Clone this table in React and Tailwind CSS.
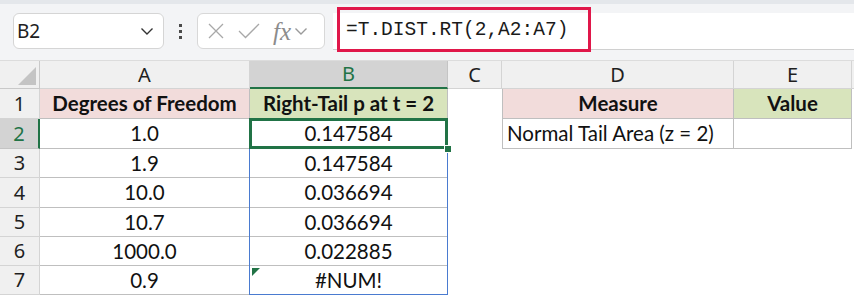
import React from "react";

const cols = "grid-cols-[40px_210px_198px_54px_232px_118px_1fr]";
const rowsTpl = "grid-rows-[28px_30px_30px_29px_30px_29px_29px_29px]";

const data = [
  ["1.0", "0.147584"],
  ["1.9", "0.147584"],
  ["10.0", "0.036694"],
  ["10.7", "0.036694"],
  ["1000.0", "0.022885"],
  ["0.9", "#NUM!"],
];

const Chevron = ({ className }) => (
  <svg className={className} width="14" height="9" viewBox="0 0 14 9" fill="none">
    <path d="M1.5 1.5 L7 7 L12.5 1.5" stroke="currentColor" strokeWidth="1.4" />
  </svg>
);

const Toolbar = () => (
  <div className="h-[61px] bg-[#f3f4f6] border-t-4 border-[#e4e7eb] border-b border-b-[#dcdcdc] flex items-start pt-[9px] pl-[13px]">
    {/* name box */}
    <div className="w-[151px] h-[36px] bg-white border border-[#d5d5d5] rounded-[6px] flex items-center justify-between pl-[3px] pr-[9px]">
      <span className="text-[19px] text-[#202020]" style={{ fontFamily: "'Noto Sans', sans-serif" }}>B2</span>
      <Chevron className="text-[#333]" />
    </div>
    <div className="w-[33px] h-[36px] flex flex-col items-center justify-center gap-[3px]">
      <span className="w-[3px] h-[3px] bg-[#4a4a4a]" />
      <span className="w-[3px] h-[3px] bg-[#4a4a4a]" />
      <span className="w-[3px] h-[3px] bg-[#4a4a4a]" />
    </div>
    {/* formula buttons */}
    <div className="w-[128px] h-[36px] bg-white border border-[#d8d8d8] rounded-[6px] flex items-center pl-[10px] text-[#a8a8a8]">
      <svg width="16" height="16" viewBox="0 0 16 16" fill="none">
        <path d="M1 1 L15 15 M15 1 L1 15" stroke="currentColor" strokeWidth="1.3" />
      </svg>
      <svg className="ml-[14px]" width="22" height="16" viewBox="0 0 22 16" fill="none">
        <path d="M1 8 L7.5 14.5 L21 1" stroke="currentColor" strokeWidth="1.3" />
      </svg>
      <span className="ml-[13px] text-[25px] italic leading-none text-[#8c8c8c]" style={{ fontFamily: "'Liberation Serif', serif" }}>fx</span>
      <Chevron className="ml-[3px] text-[#9a9a9a]" />
    </div>
    {/* formula bar */}
    <div className="ml-[8px] flex-1 h-[37px] bg-white border-b border-[#d0d0d0] flex items-center relative">
      <div className="absolute left-[4px] top-[-6px] w-[254px] h-[45px] border-[3px] border-[#e0174a]" />
      <span className="pl-[13px] text-[19.5px] text-[#1a1a1a]" style={{ fontFamily: "'Liberation Mono', monospace" }}>=T.DIST.RT(2,A2:A7)</span>
    </div>
  </div>
);

const hdr = "bg-[#f0f0f0] border-r border-b border-[#d4d4d4] flex items-center justify-center text-[20px] text-[#1f1f1f]";
const num = { fontFamily: "'Noto Sans', sans-serif" };
const cell = { fontFamily: "Lato, 'Liberation Sans', sans-serif" };
const head = "border-r border-b border-[#bfbfbf] flex items-center justify-center text-[20.5px] font-bold text-[#111]";
const val = "border-r border-b border-[#bfbfbf] flex items-center justify-center text-[20.5px] text-[#111]";

export default function App() {
  return (
    <div className="w-[854px] h-[300px] bg-white overflow-hidden">
      <Toolbar />
      <div className={`grid ${cols} ${rowsTpl}`}>
        {/* column header row */}
        <div className="bg-[#f0f0f0] border-r border-b border-[#c9c9c9] relative">
          <svg className="absolute right-[3px] bottom-[3px]" width="18" height="18" viewBox="0 0 18 18">
            <path d="M18 0 L18 18 L0 18 Z" fill="#c4c4c4" />
          </svg>
        </div>
        <div className={hdr} style={num}>A</div>
        <div className="bg-[#d3d3d3] border-r border-[#c4c4c4] border-b-2 border-b-[#217346] flex items-center justify-center text-[20px] text-[#217346]" style={num}>B</div>
        <div className={hdr} style={num}>C</div>
        <div className={hdr} style={num}>D</div>
        <div className={hdr} style={num}>E</div>
        <div className="bg-[#f0f0f0] border-b border-[#d4d4d4]" />

        {/* row 1 */}
        <div className={hdr} style={num}>1</div>
        <div className={`bg-[#f2dcdb] ${head}`} style={cell}>Degrees of Freedom</div>
        <div className={`bg-[#d8e4bc] ${head}`} style={cell}>Right-Tail p at t = 2</div>
        <div className="bg-white" />
        <div className={`bg-[#f2dcdb] border-l ${head}`} style={cell}>Measure</div>
        <div className={`bg-[#d8e4bc] ${head}`} style={cell}>Value</div>
        <div className="bg-white" />

        {/* data rows */}
        {data.map(([a, b], i) => (
          <React.Fragment key={i}>
            <div
              className={
                i === 0
                  ? "bg-[#d3d3d3] border-b border-[#c4c4c4] border-r-2 border-r-[#217346] flex items-center justify-center text-[20px] text-[#217346]"
                  : hdr
              }
              style={num}
            >
              {i + 2}
            </div>
            <div className={val} style={cell}>{a}</div>
            <div className={`relative ${val}`} style={cell}>
              {b}
              {i === 5 && (
                <svg className="absolute left-[2px] top-[2px]" width="8" height="8" viewBox="0 0 8 8">
                  <path d="M0 0 L8 0 L0 8 Z" fill="#217346" />
                </svg>
              )}
              {i === 0 && (
                <>
                  {/* reference range B2:B7 */}
                  <div className="absolute z-10 -left-[1px] top-0 -right-[1px] h-[176px] border-[1.5px] border-[#4a7bd0] pointer-events-none" />
                  {/* active cell */}
                  <div className="absolute z-20 -left-[1px] -top-[1px] -right-[1px] -bottom-[1px] border-[3px] border-[#217346] pointer-events-none" />
                  <div className="absolute z-20 -right-[5px] -bottom-[5px] w-[8px] h-[8px] bg-[#217346] border border-white" />
                </>
              )}
            </div>
            <div />
            {i === 0 ? (
              <>
                <div className="border-l border-r border-b border-[#bfbfbf] flex items-center pl-[4px] text-[20.5px] text-[#111] whitespace-nowrap" style={cell}>Normal Tail Area (z = 2)</div>
                <div className="border-r border-b border-[#bfbfbf]" />
              </>
            ) : (
              <>
                <div />
                <div />
              </>
            )}
            <div />
          </React.Fragment>
        ))}
      </div>
    </div>
  );
}
